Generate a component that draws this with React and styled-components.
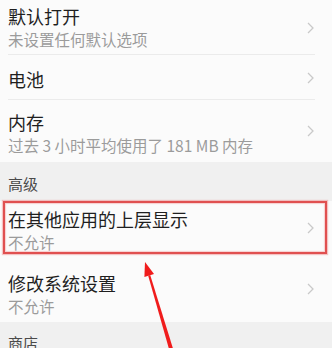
import React from "react";
import styled, { createGlobalStyle } from "styled-components";

const Global = createGlobalStyle`
  html, body { margin: 0; padding: 0; background: #fbfbfb; }
  body { font-family: "Noto Sans CJK SC", "Noto Sans", sans-serif; overflow: hidden; }
`;

const Page = styled.div`
  position: relative;
  width: 332px;
  height: 348px;
  overflow: hidden;
  background: #fbfbfb;
  display: flex;
  flex-direction: column;
`;

const Row = styled.div`
  position: relative;
  box-sizing: border-box;
  height: ${(p) => p.$h}px;
  padding: ${(p) => p.$pt}px 40px 0 8px;
  display: flex;
  flex-direction: column;
  gap: 1px;
  flex-shrink: 0;
  &::before {
    content: "";
    display: ${(p) => (p.$divider ? "block" : "none")};
    position: absolute;
    left: 8px;
    right: 17px;
    bottom: 0;
    height: 1px;
    background: #ebebeb;
  }
  &::after {
    content: "";
    display: ${(p) => (p.$highlight ? "block" : "none")};
    position: absolute;
    left: 3px;
    right: 5px;
    top: 0;
    bottom: 1px;
    border: 2px solid #e05050;
    box-shadow: 0 0 1px 1px rgba(240, 140, 140, 0.5), inset 0 0 1px 1px rgba(240, 150, 150, 0.45);
    pointer-events: none;
  }
`;

const Title = styled.div`
  font-size: 18px;
  line-height: 24px;
  color: #1f1f1f;
  white-space: nowrap;
`;

const Sub = styled.div`
  font-size: 15.5px;
  line-height: 20px;
  color: #9b9b9b;
  white-space: nowrap;
`;

const Chevron = styled.svg`
  position: absolute;
  right: 18px;
  top: 50%;
  width: 7px;
  height: 12px;
  margin-top: -6px;
`;

const Section = styled.div`
  box-sizing: border-box;
  height: ${(p) => p.$h}px;
  padding: ${(p) => p.$pt}px 8px 0 8px;
  background: #f0f0f0;
  font-size: 15px;
  line-height: 20px;
  color: #4a4a4a;
  flex-shrink: 0;
`;

const ArrowSvg = styled.svg`
  position: absolute;
  left: 130px;
  top: 255px;
  width: 60px;
  height: 100px;
  pointer-events: none;
`;

const Arrow = () => (
  <ChevronIcon />
);

function ChevronIcon() {
  return (
    <Chevron viewBox="0 0 7 12">
      <path d="M1 1 L6 6 L1 11" fill="none" stroke="#c9c9c9" strokeWidth="1.3" />
    </Chevron>
  );
}

const Item = ({ title, sub, h, pt, divider, highlight }) => (
  <Row $h={h} $pt={pt} $divider={divider} $highlight={highlight}>
    <Title>{title}</Title>
    {sub && <Sub>{sub}</Sub>}
    <Arrow />
  </Row>
);

export default function App() {
  return (
    <>
      <Global />
      <Page>
        <Item title="默认打开" sub="未设置任何默认选项" h={55} pt={4} divider />
        <Item title="电池" h={45} pt={11.5} divider />
        <Item title="内存" sub="过去 3 小时平均使用了 181 MB 内存" h={62} pt={10} />
        <Section $h={39} $pt={11.5}>高级</Section>
        <Item title="在其他应用的上层显示" sub="不允许" h={54} pt={6} highlight />
        <Item title="修改系统设置" sub="不允许" h={67} pt={15.5} />
        <Section $h={40} $pt={11}>商店</Section>
        <ArrowSvg viewBox="0 0 60 100">
          <polygon points="15,7 24,19 14.4,22" fill="#f01c1c" />
          <polygon points="20.2,20 18.2,20.8 41,101 45,100" fill="#f01c1c" />
        </ArrowSvg>
      </Page>
    </>
  );
}
